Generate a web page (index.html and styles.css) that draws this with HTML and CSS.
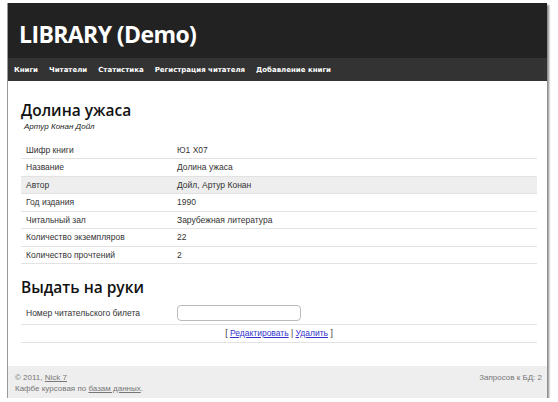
FILE: index.html
```html
<!DOCTYPE html>
<html lang="ru">
<head>
	<meta charset="UTF-8">
	<meta name="viewport" content="width=device-width, initial-scale=1.0">
	<title>LIBRARY (Demo)</title>
	<link rel="stylesheet" href="styles.css">
</head>
<body>

	<div class="window">
		<header class="header">
			<div class="header__title">LIBRARY (Demo)</div>
		</header>

		<nav class="nav">
			<a class="nav__item" href="#">Книги</a>
			<a class="nav__item" href="#">Читатели</a>
			<a class="nav__item" href="#">Статистика</a>
			<a class="nav__item" href="#">Регистрация читателя</a>
			<a class="nav__item" href="#">Добавление книги</a>
		</nav>

		<main class="content">
			<h1 class="content__title">Долина ужаса</h1>
			<p class="content__author">Артур Конан Дойл</p>

			<table class="info">
				<tr><td>Шифр книги</td><td>Ю1 Х07</td></tr>
				<tr><td>Название</td><td>Долина ужаса</td></tr>
				<tr class="info__row--hover"><td>Автор</td><td>Дойл, Артур Конан</td></tr>
				<tr><td>Год издания</td><td>1990</td></tr>
				<tr><td>Читальный зал</td><td>Зарубежная литература</td></tr>
				<tr><td>Количество экземпляров</td><td>22</td></tr>
				<tr><td>Количество прочтений</td><td>2</td></tr>
			</table>

			<h2 class="content__title content__title--second">Выдать на руки</h2>

			<table class="info info--form">
				<tr>
					<td>Номер читательского билета</td>
					<td><input class="info__input" type="text"></td>
				</tr>
				<tr>
					<td colspan="2" class="info__actions">[ <a href="#">Редактировать</a> | <a href="#">Удалить</a> ]</td>
				</tr>
			</table>
		</main>

		<footer class="footer">
			<div class="footer__left">
				© 2011, <a href="#">Nick 7</a><br>
				Кафбе курсовая по <a href="#">базам данных</a>.
			</div>
			<div class="footer__right">Запросов к БД: 2</div>
		</footer>
	</div>

</body>
</html>
```

FILE: styles.css
```css
*, *::after, *::before {
	box-sizing: border-box;
}

body {
	margin: 0;
	background: #fff;
	font-family: "Liberation Sans", Arial, sans-serif;
	color: #333;
}

.window {
	display: flex;
	flex-direction: column;
	width: 540px;
	height: 395px;
	margin: 3px 0 0 7px;
	border-left: 1px solid #999;
	box-shadow: 2px 2px 2px #888;
}

.header {
	height: 55px;
	padding: 15px 0 0 11px;
	background-color: #222;
}

.header__title {
	font-family: "Open Sans", sans-serif;
	font-size: 23px;
	font-weight: bold;
	letter-spacing: -0.6px;
	color: #fff;
}

.nav {
	display: flex;
	align-items: center;
	gap: 11px;
	height: 23px;
	padding-left: 6px;
	background-color: #333;
}

.nav__item {
	font-family: "DejaVu Sans", Verdana, sans-serif;
	font-size: 7px;
	font-weight: bold;
	color: #fff;
	text-decoration: none;
}

.content {
	flex: 1;
	padding: 19px 10px 0 13px;
}

.content__title {
	margin: 0;
	font-family: "Open Sans", sans-serif;
	font-size: 15.5px;
	font-weight: 600;
	line-height: 20px;
	color: #111;
}

.content__title--second {
	margin-top: 13px;
}

.content__author {
	margin: 2px 0 10px 3px;
	font-size: 8px;
	font-style: italic;
	color: #222;
}

.info {
	width: 100%;
	border-collapse: collapse;
	font-size: 8.5px;
}

.info td {
	height: 17.5px;
	padding: 0 5px;
	border-bottom: 1px solid #e2e2e2;
}

.info td:first-child {
	width: 151px;
}

.info__row--hover td {
	background-color: #eee;
}

.info--form {
	margin-top: 5px;
}

.info--form td {
	height: 22px;
}

.info--form .info__actions {
	height: 18px;
}

.info__input {
	display: block;
	width: 124px;
	height: 16px;
	border: 1px solid #bbb;
	border-radius: 4px;
}

.info__actions {
	text-align: center;
	color: #333;
}

.info__actions a {
	color: #33c;
}

.footer {
	display: flex;
	justify-content: space-between;
	height: 32px;
	padding: 6px 5px 0 7px;
	font-size: 8px;
	line-height: 11px;
	color: #777;
	background-color: #eee;
}

.footer a {
	color: #777;
}
```
